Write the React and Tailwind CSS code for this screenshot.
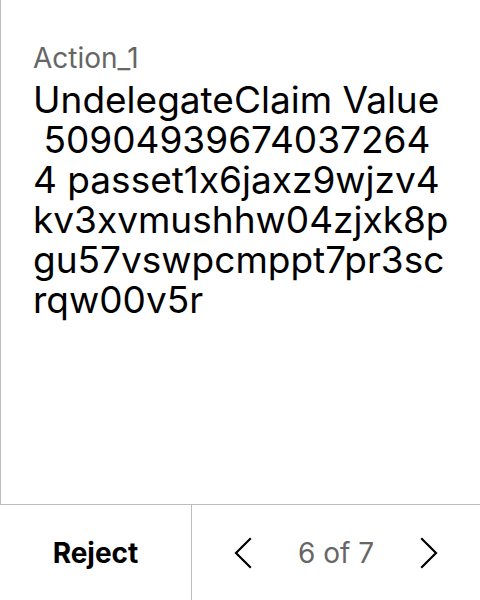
import React from 'react';

const font = { fontFamily: 'Inter, "Noto Sans", sans-serif', fontFeatureSettings: '"calt" 0' };

function Chevron({ dir }) {
    return (
        <svg width="18" height="32" viewBox="0 0 18 32" fill="none" stroke="#000" strokeWidth="2.2" strokeLinecap="square">
            {dir === 'left' ? <path d="M16 2 L2 16 L16 30" /> : <path d="M2 2 L16 16 L2 30" />}
        </svg>
    );
}

export default function App() {
    const message = 'UndelegateClaim Value  509049396740372644 passet1x6jaxz9wjzv4kv3xvmushhw04zjxk8pgu57vswpcmppt7pr3scrqw00v5r';

    return (
        <div className="h-[600px] w-[480px] flex flex-col bg-white text-black" style={font}>
            {/* message */}
            <div className="flex-1 border-l border-[#bdbdbd] pl-8 pr-[30px] pt-10">
                <div className="text-[28px] leading-[36px] text-[#666666]">Action_1</div>
                <div className="mt-1 text-[37px] leading-[40px] [word-break:break-all] [white-space:break-spaces]">
                    {message}
                </div>
            </div>

            {/* footer */}
            <div className="h-24 flex border-t border-[#bdbdbd]">
                <button className="w-[192px] border-r border-[#bdbdbd] flex items-center justify-center text-[28px] font-bold">
                    Reject
                </button>
                <div className="flex-1 flex items-center justify-between px-[42px]">
                    <Chevron dir="left" />
                    <span className="text-[28px] text-[#666666]">6 of 7</span>
                    <Chevron dir="right" />
                </div>
            </div>
        </div>
    );
}
